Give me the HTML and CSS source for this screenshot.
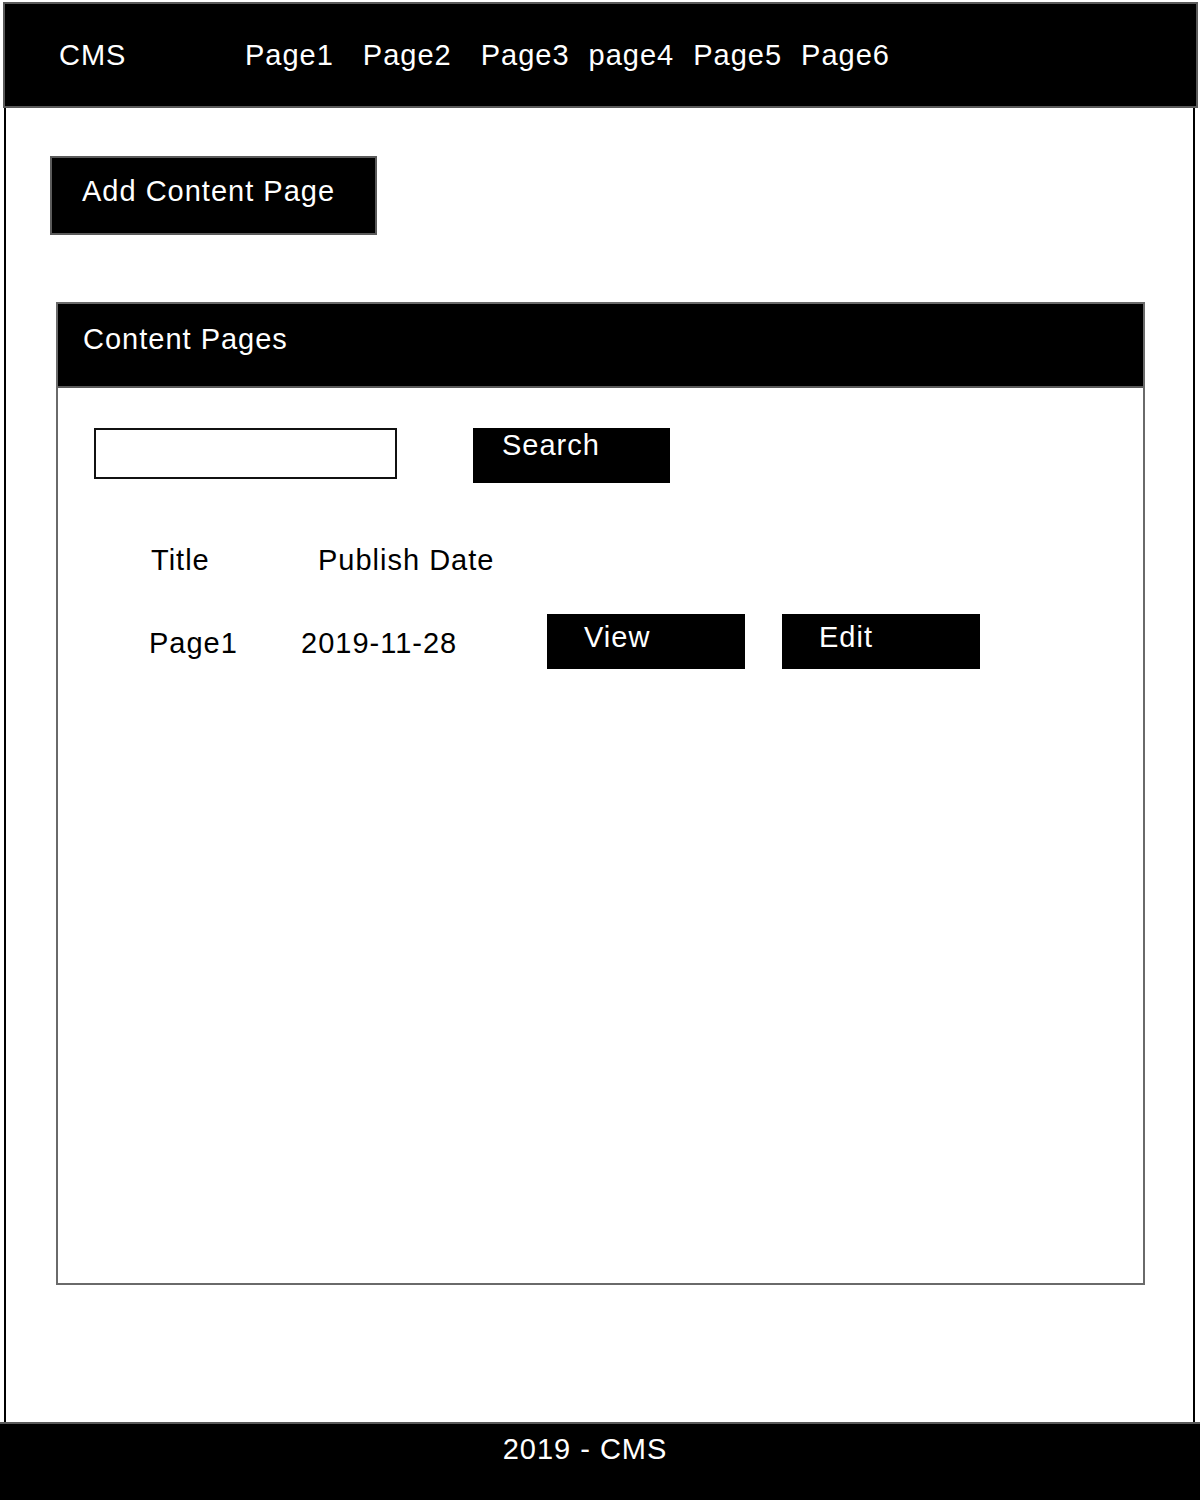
FILE: index.html
```html
<!DOCTYPE html>
<html lang="en">
<head>
<meta charset="utf-8">
<title>CMS</title>
<link rel="stylesheet" href="styles.css">
</head>
<body>
<header class="topbar">
  <div class="brand">CMS</div>
  <nav class="nav">
    <a class="nav-link nav-wide">Page1</a>
    <a class="nav-link nav-wide">Page2</a>
    <a class="nav-link">Page3</a>
    <a class="nav-link">page4</a>
    <a class="nav-link">Page5</a>
    <a class="nav-link">Page6</a>
  </nav>
</header>
<main class="frame">
  <button class="add-btn">Add Content Page</button>
  <section class="panel">
    <div class="panel-head">Content Pages</div>
    <div class="panel-body">
      <div class="search-row">
        <input class="search-input" type="text">
        <button class="btn search-btn">Search</button>
      </div>
      <div class="table-head">
        <span class="th-title">Title</span>
        <span class="th-date">Publish Date</span>
      </div>
      <div class="table-row">
        <span class="td-title">Page1</span>
        <span class="td-date">2019-11-28</span>
        <button class="btn row-btn">View</button>
        <button class="btn row-btn">Edit</button>
      </div>
    </div>
  </section>
</main>
<footer class="footer">2019 - CMS</footer>
</body>
</html>
```
FILE: styles.css
```css
* { box-sizing: border-box; }
html, body { margin: 0; padding: 0; background: #fff; }
body {
  font-family: "Liberation Sans", Arial, Helvetica, sans-serif;
  font-size: 29px;
  letter-spacing: 1px;
  color: #000;
  width: 1200px;
  height: 1500px;
  overflow: hidden;
}
button, input { font: inherit; letter-spacing: inherit; }

.topbar {
  margin: 2px 2px 0 3px;
  height: 106px;
  background: #000;
  border: 2px solid #5a5a5a;
  display: flex;
  align-items: center;
  padding-left: 54px;
  color: #fff;
}
.brand { width: 186px; }
.nav { display: flex; gap: 19px; }
.nav-link { color: #fff; text-decoration: none; }
.nav-wide { margin-right: 10px; }

.frame {
  margin: 0 5px 0 4px;
  height: 1314px;
  border-left: 2px solid #000;
  border-right: 2px solid #000;
  padding-top: 48px;
}
.add-btn {
  display: block;
  margin-left: 44px;
  width: 327px;
  height: 79px;
  background: #000;
  color: #fff;
  border: 2px solid #5a5a5a;
  text-align: left;
  padding: 0 0 8px 30px;
  line-height: 33px;
}
.panel {
  margin: 67px 0 0 50px;
  width: 1089px;
  height: 983px;
  border: 2px solid #6a6a6a;
}
.panel-head {
  height: 84px;
  background: #000;
  color: #fff;
  border-bottom: 2px solid #5a5a5a;
  padding: 19px 0 0 25px;
  line-height: 33px;
}
.panel-body { padding: 40px 0 0 36px; }
.search-row { display: flex; align-items: flex-start; gap: 76px; }
.search-input {
  width: 303px;
  height: 51px;
  border: 2px solid #111;
  background: #fff;
  padding: 0;
  margin: 0;
  outline: none;
}
.btn {
  background: #000;
  color: #fff;
  border: none;
  text-align: left;
  padding: 0;
  margin: 0;
}
.search-btn {
  width: 197px;
  height: 55px;
  padding: 0 0 20px 29px;
  line-height: 33px;
}
.table-head {
  display: flex;
  padding-left: 57px;
  margin-top: 61px;
  line-height: 33px;
}
.th-title { width: 167px; }
.table-row {
  display: flex;
  align-items: center;
  padding-left: 55px;
  margin-top: 37px;
}
.td-title { width: 152px; padding-top: 4px; }
.td-date { width: 246px; padding-top: 4px; }
.row-btn {
  width: 198px;
  height: 55px;
  padding: 0 0 8px 37px;
  line-height: 33px;
  margin-right: 37px;
}
.footer {
  height: 78px;
  background: #000;
  border-top: 2px solid #5a5a5a;
  color: #fff;
  text-align: center;
  padding: 9px 30px 0 0;
  line-height: 33px;
}
```
